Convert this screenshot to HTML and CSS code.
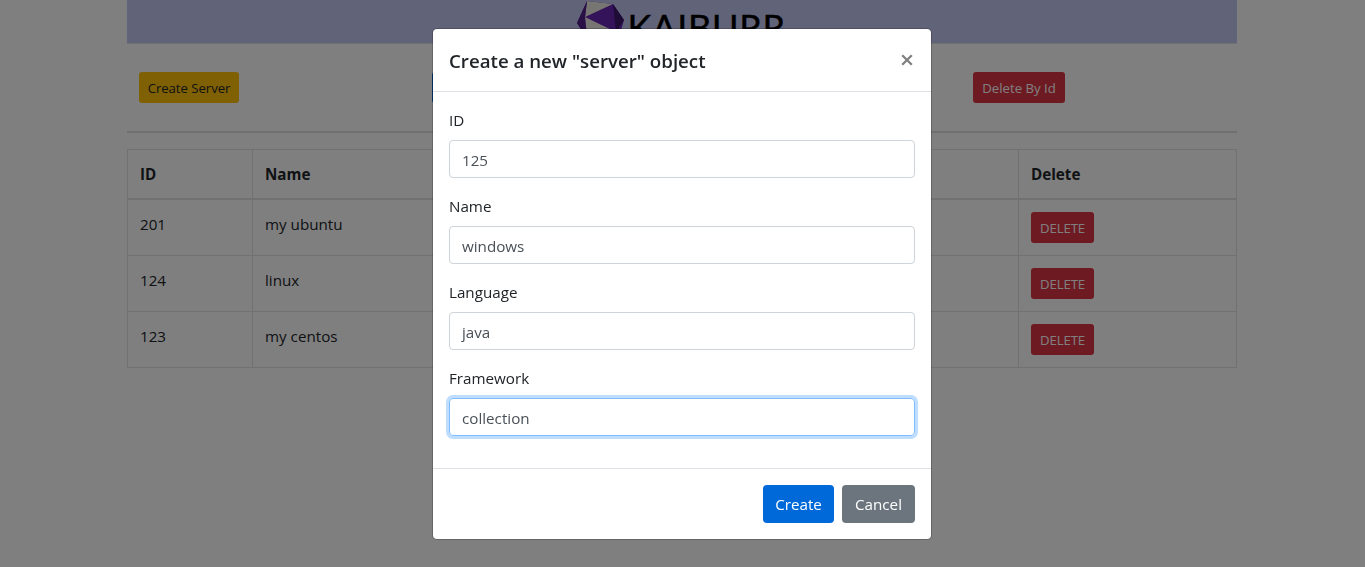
FILE: index.html
```html
<!DOCTYPE html>
<html lang="en">
<head>
<meta charset="utf-8">
<title>Servers</title>
<link rel="stylesheet" href="styles.css">
</head>
<body>
<main class="container">
  <header class="banner">
    <svg class="logo" width="210" height="54" viewBox="0 0 210 54" role="img" aria-label="Kaiburr">
      <polygon points="11,1 37,4 48,20 41,44 20,50 1,23" fill="#6826b5"/>
      <polygon points="11,1 37,4 9,17" fill="#efece6"/>
      <polygon points="9,17 40,32 12,44" fill="#efece6"/>
      <polygon points="11,1 1,23 10,38 9,17" fill="#52208c"/>
      <polygon points="37,4 48,20 40,32" fill="#3c176c"/>
      <text class="logo-text" x="51.5" y="41" textLength="157.5">KAIBURR</text>
    </svg>
  </header>
  <nav class="toolbar">
    <div class="tool"><button class="btn small warning">Create Server</button></div>
    <div class="tool middle"><button class="btn small primary">Find Server</button></div>
    <div class="tool last"><button class="btn small danger">Delete By Id</button></div>
  </nav>
  <table class="servers">
    <colgroup><col class="c1"><col class="c2"><col class="c3"><col class="c4"></colgroup>
    <thead><tr><th>ID</th><th>Name</th><th></th><th>Delete</th></tr></thead>
    <tbody>
      <tr><td>201</td><td>my ubuntu</td><td></td><td><button class="btn small danger del">DELETE</button></td></tr>
      <tr><td>124</td><td>linux</td><td></td><td><button class="btn small danger del">DELETE</button></td></tr>
      <tr><td>123</td><td>my centos</td><td></td><td><button class="btn small danger del">DELETE</button></td></tr>
    </tbody>
  </table>
</main>
<div class="backdrop">
  <section class="modal" role="dialog">
    <div class="modal-header"><h5 class="title">Create a new "server" object</h5>
      <svg class="close" width="12" height="12" viewBox="0 0 12 12"><path d="M1.2 1.2 10.8 10.8M10.8 1.2 1.2 10.8"/></svg></div>
    <form class="modal-body">
      <div class="group"><label>ID</label><div class="field">125</div></div>
      <div class="group"><label>Name</label><div class="field">windows</div></div>
      <div class="group"><label>Language</label><div class="field">java</div></div>
      <div class="group"><label>Framework</label><div class="field focused">collection</div></div>
    </form>
    <div class="modal-footer"><button class="btn primary create">Create</button><button class="btn secondary cancel">Cancel</button></div>
  </section>
</div>
</body>
</html>
```
FILE: styles.css
```css
* { box-sizing: border-box; }
body { margin: 0; height: 567px; overflow: hidden; background: #fff; color: #212529; font: 15.2px/24px "Open Sans", "Noto Sans", sans-serif; }
.container { width: 1110px; margin-left: 127px; }
.banner { height: 44px; background: #c2c8f2; border-bottom: 1px solid #dee2e6; padding-left: 449px; }
.logo { display: block; height: 54px; margin-bottom: -11px; }
.logo-text { font: 36px Lato, sans-serif; fill: #000; stroke: #000; stroke-width: .4; }
.toolbar { display: flex; height: 89px; padding: 28px 12px; border-bottom: 2px solid #dfdfdf; margin-bottom: 16px; }
.middle { margin-left: 193px; }
.last { margin-left: auto; padding-right: 160px; }
.btn { display: block; border: 0; border-radius: 4px; height: 38px; padding: 0; font: 15.2px/38px "Open Sans", sans-serif; color: #fff; text-align: center; white-space: nowrap; }
.small { height: 31px; font-size: 13.2px; line-height: 32px; border-radius: 3px; }
.warning { width: 100px; background: #ffc107; color: #212529; letter-spacing: -.05px; }
.danger { width: 92px; background: #dc3545; }
.primary { background: #0069d9; }
.secondary { background: #6c757d; }
.del { width: 63px; letter-spacing: -.1px; }
.servers { width: 1110px; table-layout: fixed; border-collapse: collapse; border: 1px solid #dee2e6; }
.c1 { width: 125px; }
.c2 { width: 320px; }
.c4 { width: 218px; }
.servers th, .servers td { border: 1px solid #dee2e6; padding: 12px; text-align: left; vertical-align: top; }
.servers th { font-weight: 700; border-bottom-width: 2px; }
.servers td { height: 56px; }
.backdrop { position: fixed; inset: 0; background: rgba(0,0,0,.5); padding: 28px 0 0 432px; }
.modal { width: 500px; height: 512px; background: #fff; background-clip: padding-box; border: 1px solid rgba(0,0,0,.2); border-radius: 5px; }
.modal-header { height: 63px; padding: 16px; display: flex; justify-content: space-between; border-bottom: 1px solid #dee2e6; }
.title { margin: 0; font-size: 18.7px; line-height: 32px; font-weight: 600; }
.close { margin: 9px 2.5px 0 0; stroke: #808080; stroke-width: 2.3; fill: none; }
.modal-body { padding: 16px; height: 376px; }
.group { height: 86px; }
.group label { display: block; line-height: 24px; height: 32px; }
.field { height: 38px; padding: 0 12px; line-height: 39px; border: 1px solid #ced4da; border-radius: 4px; color: #495057; }
.focused { border-color: #80bdff; box-shadow: 0 0 0 3px #bfdeff; }
.modal-footer { display: flex; justify-content: flex-end; gap: 8px; border-top: 1px solid #dee2e6; padding: 16px; }
.create { width: 71px; }
.cancel { width: 73px; }
```
